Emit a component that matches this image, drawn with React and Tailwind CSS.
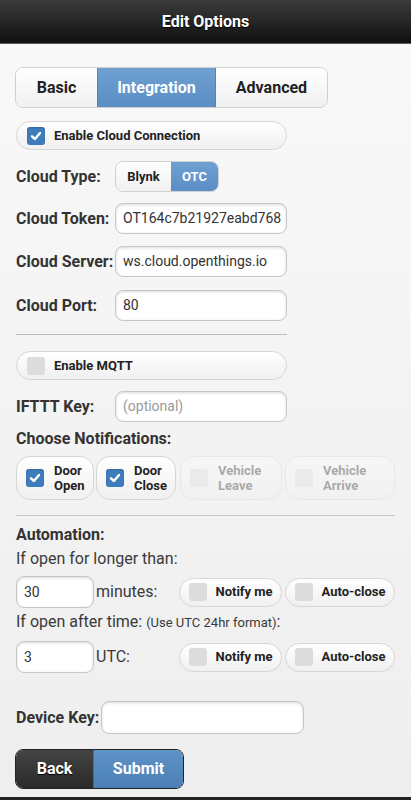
import React from 'react';

const Check = ({ checked }) =>
  checked ? (
    <span className="w-[18px] h-[18px] rounded-[3px] bg-[#3f7cbc] flex items-center justify-center shrink-0 shadow-[inset_0_1px_2px_rgba(0,0,0,0.2)]">
      <svg width="12" height="12" viewBox="0 0 12 12">
        <polyline points="2,6.3 5,9 10,3" fill="none" stroke="#fff" strokeWidth="2.4" strokeLinecap="round" strokeLinejoin="round" />
      </svg>
    </span>
  ) : (
    <span className="w-[18px] h-[18px] rounded-[3px] bg-[#dcdcdc] shrink-0" />
  );

const PillCheck = ({ label, checked, className = '' }) => (
  <div className={`h-[29px] rounded-full border border-[#d6d6d6] bg-gradient-to-b from-white to-[#f0f0f0] flex items-center pl-[10px] gap-[9px] ${className}`}>
    <Check checked={checked} />
    <span className="text-[13px] font-bold text-[#222]">{label}</span>
  </div>
);

const Input = ({ value, placeholder, className = '' }) => (
  <div className={`h-[31px] rounded-[8px] border border-[#c6c6c6] bg-white shadow-[inset_0_1px_3px_rgba(0,0,0,0.15)] flex items-center px-[7px] text-[14px] ${className}`}>
    {value ? <span className="text-[#333]">{value}</span> : <span className="text-[#9a9a9a]">{placeholder}</span>}
  </div>
);

const Row = ({ label, children, className = '' }) => (
  <div className={`flex items-center ${className}`}>
    <span className="w-[99px] text-[16px] font-bold text-[#333] whitespace-nowrap">{label}</span>
    {children}
  </div>
);

const NotifyBtn = ({ top, bottom, checked, disabled, className = '' }) => (
  <div className={`h-[44px] rounded-[14px] border border-[#d6d6d6] bg-gradient-to-b from-white to-[#f0f0f0] flex items-center pl-[9px] gap-[10px] ${disabled ? 'opacity-35' : ''} ${className}`}>
    <Check checked={checked} />
    <span className="text-[13px] font-bold text-[#222] leading-[15px]">
      {top}
      <br />
      {bottom}
    </span>
  </div>
);

const SmallPill = ({ label, className = '' }) => (
  <div className={`h-[29px] rounded-full border border-[#d6d6d6] bg-gradient-to-b from-white to-[#f0f0f0] flex items-center pl-[9px] ${className}`}>
    <Check checked={false} />
    <span className="flex-1 text-center text-[13px] font-bold text-[#222]">{label}</span>
  </div>
);

export default function App() {
  return (
    <div className="w-[411px] h-[800px] overflow-hidden flex flex-col bg-gradient-to-b from-[#f9f9f9] to-[#eeeeee]" style={{ fontFamily: 'Roboto, "Liberation Sans", sans-serif' }}>
      <div className="h-[44px] shrink-0 bg-gradient-to-b from-[#3c3c3c] to-[#111] border-b border-[#5a5a5a] flex items-center justify-center">
        <h1 className="text-white text-[16px] font-bold [text-shadow:0_1px_1px_#000]">Edit Options</h1>
      </div>

      <div className="flex-1 flex flex-col pl-[16px]">
        {/* tabs */}
        <div className="mt-[23px] -ml-[1px] flex w-[313px] h-[41px] rounded-[8px] border border-[#cfcfcf] overflow-hidden text-[16px] font-bold">
          <div className="w-[81px] flex items-center justify-center bg-gradient-to-b from-white to-[#f0f0f0] text-[#222]">Basic</div>
          <div className="w-[119px] flex items-center justify-center bg-gradient-to-b from-[#6fa0d2] to-[#5a8ec4] text-white border-x border-[#4d86bf]">Integration</div>
          <div className="flex-1 flex items-center justify-center bg-gradient-to-b from-white to-[#f0f0f0] text-[#222]">Advanced</div>
        </div>

        <PillCheck label="Enable Cloud Connection" checked className="mt-[13px] w-[271px]" />

        <Row label="Cloud Type:" className="mt-[11px] h-[31px]">
          <div className="flex h-[31px] rounded-[8px] border border-[#d0d0d0] overflow-hidden text-[13px] font-bold">
            <div className="w-[55px] flex items-center justify-center bg-gradient-to-b from-white to-[#f0f0f0] text-[#222]">Blynk</div>
            <div className="w-[47px] flex items-center justify-center bg-gradient-to-b from-[#6fa0d2] to-[#5a8ec4] text-white">OTC</div>
          </div>
        </Row>

        <Row label="Cloud Token:" className="mt-[11px]">
          <Input value="OT164c7b21927eabd768" className="w-[172px]" />
        </Row>
        <Row label="Cloud Server:" className="mt-[12px]">
          <Input value="ws.cloud.openthings.io" className="w-[172px]" />
        </Row>
        <Row label="Cloud Port:" className="mt-[13px]">
          <Input value="80" className="w-[172px]" />
        </Row>

        <div className="mt-[13px] w-[271px] h-[1px] bg-[#bdbdbd]" />

        <PillCheck label="Enable MQTT" className="mt-[16px] w-[271px]" />

        <Row label="IFTTT Key:" className="mt-[11px]">
          <Input placeholder="(optional)" className="w-[172px]" />
        </Row>

        <div className="mt-[5px] text-[16px] font-bold text-[#333]">Choose Notifications:</div>

        <div className="mt-[5px] flex">
          <NotifyBtn top="Door" bottom="Open" checked className="w-[78px]" />
          <NotifyBtn top="Door" bottom="Close" checked className="ml-[2px] w-[80px]" />
          <NotifyBtn top="Vehicle" bottom="Leave" disabled className="ml-[4px] w-[102px]" />
          <NotifyBtn top="Vehicle" bottom="Arrive" disabled className="ml-[3px] w-[110px]" />
        </div>

        <div className="mt-[15px] w-[379px] h-[1px] bg-[#c6c6c6]" />

        <div className="mt-[7px] text-[16px] leading-[24px] font-bold text-[#333]">Automation:</div>
        <div className="text-[16px] leading-[24px] text-[#3a3a3a]">If open for longer than:</div>

        <div className="mt-[5px] flex items-center">
          <Input value="30" className="w-[78px] h-[32px]" />
          <span className="ml-[2px] w-[83px] text-[16px] text-[#3a3a3a]">minutes:</span>
          <SmallPill label="Notify me" className="w-[103px]" />
          <SmallPill label="Auto-close" className="ml-[3px] w-[110px]" />
        </div>

        <div className="mt-[2px] text-[16px] leading-[24px] text-[#3a3a3a]">
          If open after time: <span className="text-[13px]">(Use UTC 24hr format)</span>:
        </div>

        <div className="mt-[6px] flex items-center">
          <Input value="3" className="w-[78px] h-[32px]" />
          <span className="ml-[2px] w-[83px] text-[16px] text-[#3a3a3a]">UTC:</span>
          <SmallPill label="Notify me" className="w-[103px]" />
          <SmallPill label="Auto-close" className="ml-[3px] w-[110px]" />
        </div>

        <div className="mt-[28px] flex items-center">
          <span className="w-[85px] text-[16px] font-bold text-[#333]">Device Key:</span>
          <Input className="w-[203px] h-[33px]" />
        </div>

        <div className="mt-[15px] -ml-[1px] flex w-[169px] h-[40px] rounded-[8px] overflow-hidden text-[16px] font-bold text-white border border-[#222]">
          <div className="w-[77px] flex items-center justify-center bg-gradient-to-b from-[#444] to-[#2a2a2a] [text-shadow:0_1px_1px_#000]">Back</div>
          <div className="flex-1 flex items-center justify-center bg-gradient-to-b from-[#5f93c8] to-[#4a7fb5] border-l border-[#3b6ea3]">Submit</div>
        </div>
      </div>

      <div className="h-[3px] shrink-0 bg-[#222]" />
    </div>
  );
}
